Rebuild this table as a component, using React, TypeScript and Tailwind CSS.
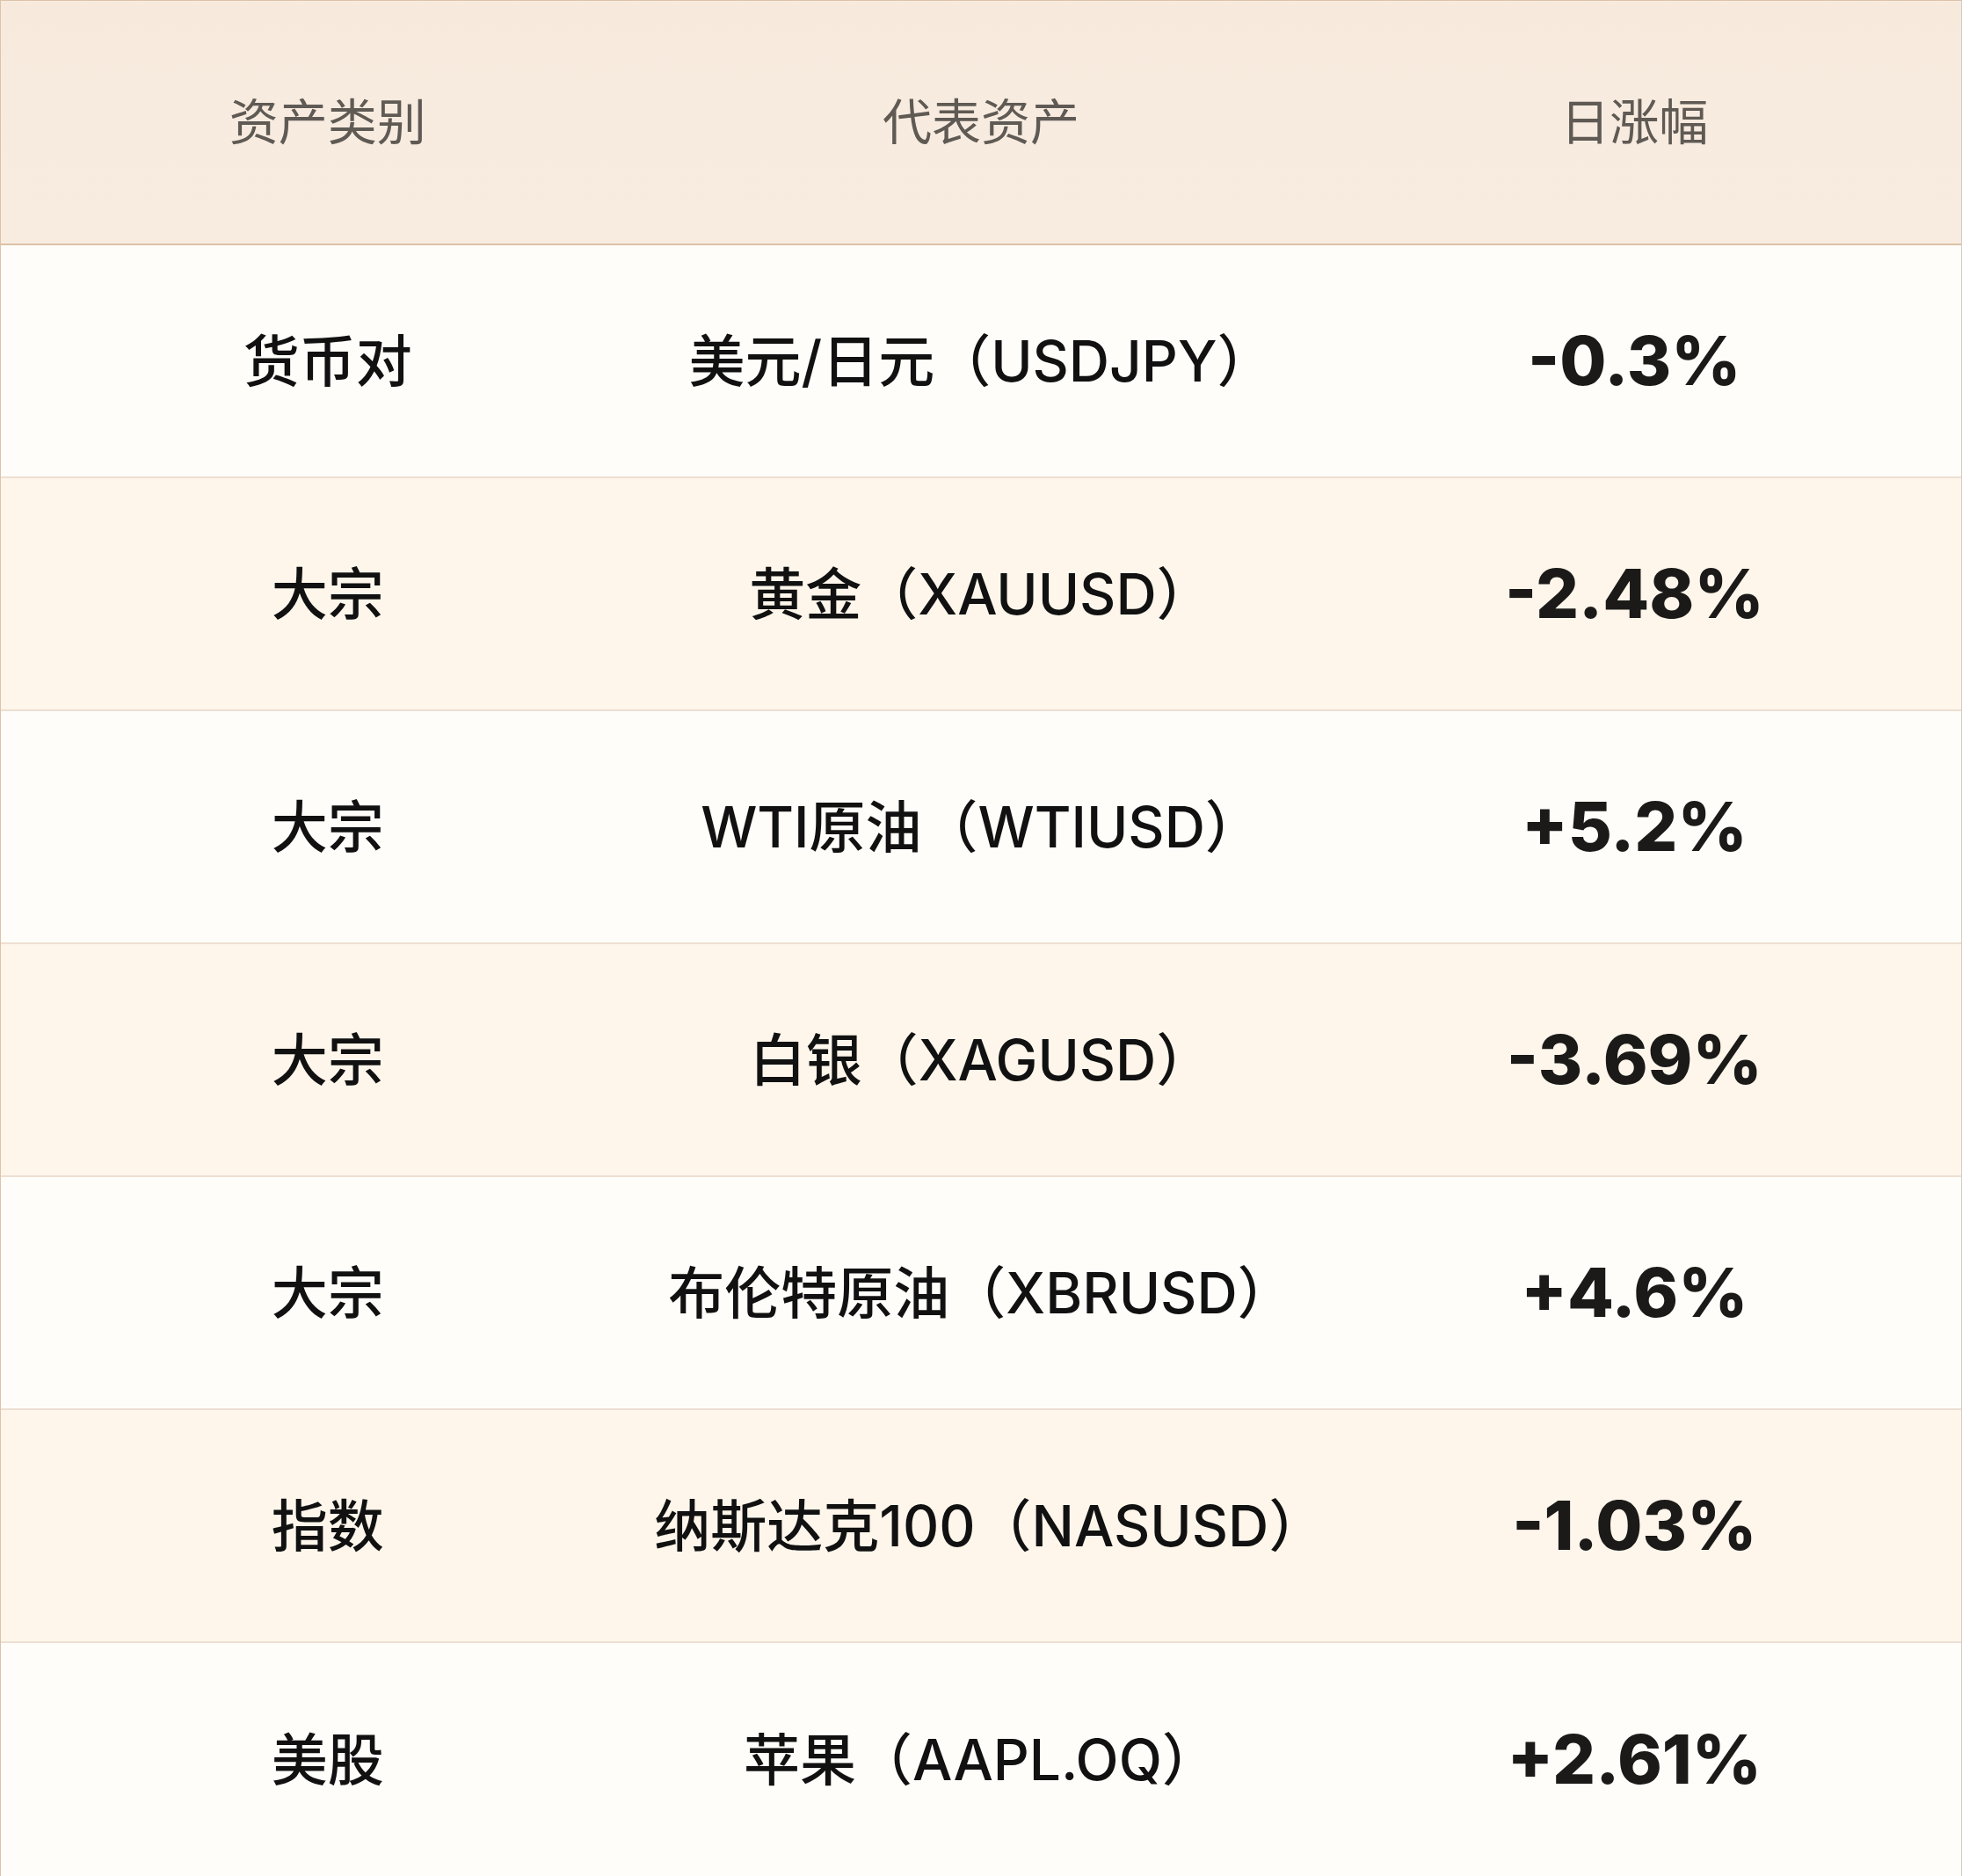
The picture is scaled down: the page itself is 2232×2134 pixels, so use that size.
// 资产日涨幅对照表

interface AssetRow {
  category: string;
  asset: string;
  change: string;
}

const rows: AssetRow[] = [
  { category: '货币对', asset: '美元/日元（USDJPY）', change: '-0.3%' },
  { category: '大宗', asset: '黄金（XAUUSD）', change: '-2.48%' },
  { category: '大宗', asset: 'WTI原油（WTIUSD）', change: '+5.2%' },
  { category: '大宗', asset: '白银（XAGUSD）', change: '-3.69%' },
  { category: '大宗', asset: '布伦特原油（XBRUSD）', change: '+4.6%' },
  { category: '指数', asset: '纳斯达克100（NASUSD）', change: '-1.03%' },
  { category: '美股', asset: '苹果（AAPL.OQ）', change: '+2.61%' },
];

const font = "font-['Inter','Noto_Sans_CJK_SC',sans-serif]";

export default function App() {
  return (
    <div
      className={`flex w-[2232px] flex-col border-t border-l border-t-[#dcc3ab] border-l-[#dcc3ab] border-r border-b border-r-[#d3cbc3] border-b-[#d3cbc3] ${font}`}
    >
      <div className="grid h-[278px] grid-cols-3 items-center border-b-2 border-[#dcc0a6] bg-gradient-to-b from-[#f7eadd] to-[#f8ece1] text-center text-[56px] text-[#5f5a54]">
        <div>资产类别</div>
        <div>代表资产</div>
        <div>日涨幅</div>
      </div>

      {rows.map((row, i) => (
        <div
          key={i}
          className={`grid h-[265px] grid-cols-3 items-center text-center ${
            i < rows.length - 1 ? 'border-b-2 border-[#eddfd2]' : ''
          } ${i % 2 === 0 ? 'bg-[#fefdfa]' : 'bg-[#fef6eb]'}`}
        >
          <div className="text-[64px] font-medium text-[#111111]">{row.category}</div>
          <div className="text-[64px] font-medium text-[#111111]">{row.asset}</div>
          <div className="text-[77px] font-extrabold text-[#1b1a18]">{row.change}</div>
        </div>
      ))}
    </div>
  );
}
